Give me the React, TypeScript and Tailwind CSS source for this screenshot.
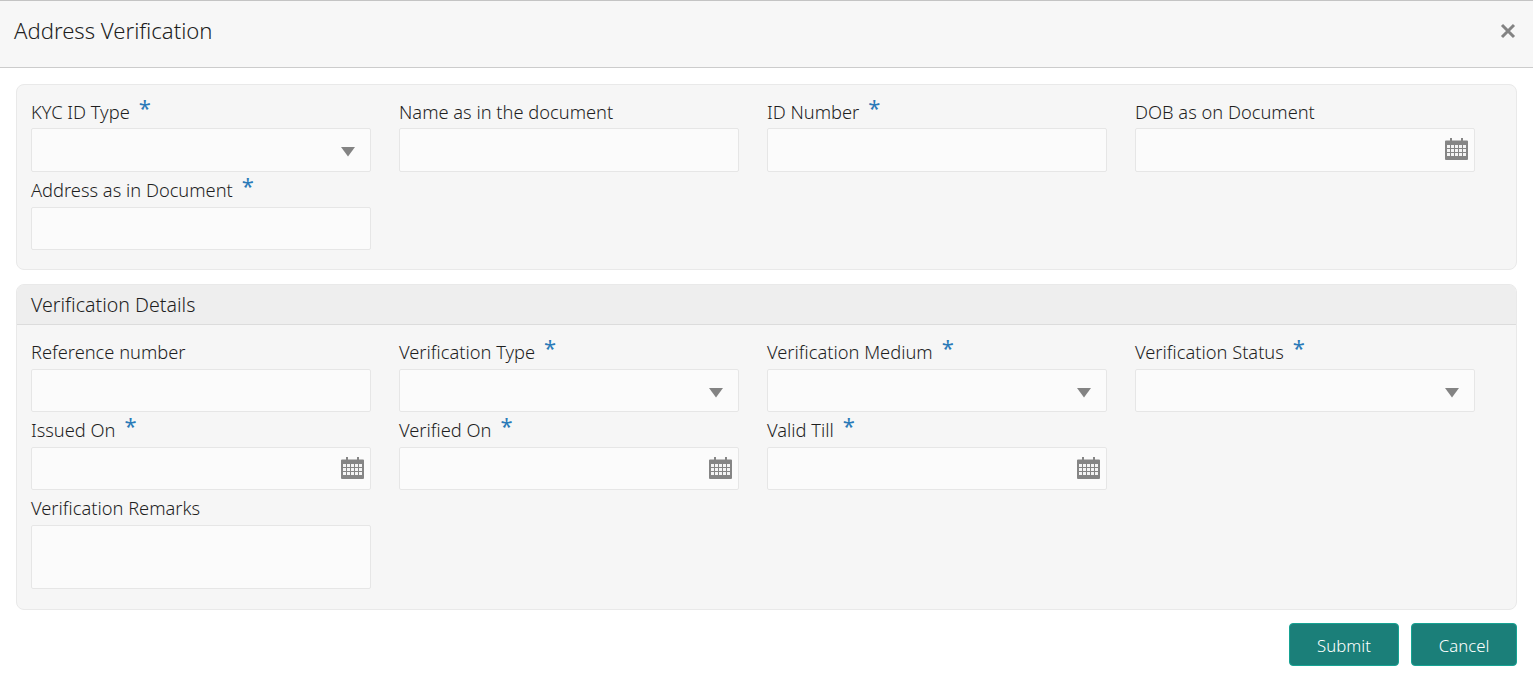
import React from 'react';

const Star = () => <span className="ml-[9px] text-[22px] font-normal leading-[22px] text-[#2a7ab8] relative top-[-5px] h-[22px]">*</span>;

const Caret = () => (
  <svg width="16" height="10" viewBox="0 0 16 10" className="absolute right-[14px] top-1/2 -translate-y-[3px]">
    <path d="M1 0h14L8 9.500z" fill="#838383" />
  </svg>
);

const CalendarIcon = () => (
  <svg width="23" height="23" viewBox="0 0 23 23" className="absolute right-[6px] top-1/2 -translate-y-[13px]">
    <path d="M0 4.500a1 1 0 0 1 1-1h4V1h2v2.500h9V1h2v2.500h4a1 1 0 0 1 1 1V22a1 1 0 0 1-1 1H1a1 1 0 0 1-1-1z" fill="#858585" />
    <path
      d="M2 8h3v3H2zM6 8h3v3H6zM10 8h3v3h-3zM14 8h3v3h-3zM18 8h3v3h-3zM2 12h3v3H2zM6 12h3v3H6zM10 12h3v3h-3zM14 12h3v3h-3zM18 12h3v3h-3zM2 16h3v3H2zM6 16h3v3H6zM10 16h3v3h-3zM14 16h3v3h-3zM18 16h3v3h-3z"
      fill="#f4f4f4"
    />
  </svg>
);

interface FieldProps {
  label: string;
  required?: boolean;
  kind?: 'text' | 'select' | 'date' | 'area';
  tall?: boolean;
}

const Field: React.FC<FieldProps> = ({ label, required, kind = 'text', tall }) => (
  <div className="w-[340px]">
    <div className={`flex h-[35px] items-center text-[18.3px] leading-[26px] font-[350] text-[#1f1f1f] ${tall ? 'pt-[3px]' : 'pt-[1px]'}`}>
      <span>{label}</span>
      {required && <Star />}
    </div>
    <div
      className={`relative rounded-[2px] border border-[#e6e6e6] bg-[#fbfbfb] ${
        kind === 'area' ? 'h-[64px]' : tall ? 'h-[44px]' : 'h-[43px]'
      }`}
    >
      {kind === 'select' && <Caret />}
      {kind === 'date' && <CalendarIcon />}
    </div>
  </div>
);

const App: React.FC = () => {
  return (
    <div className="w-[1533px] h-[684px] overflow-hidden bg-white font-['Noto_Sans',sans-serif]">
      {/* Entête */}
      <div className="flex h-[68px] items-center justify-between border-y border-t-[#c4c4c4] border-b-[#cccccc] bg-[#f7f7f7] pb-[6px] pl-[14px] pr-[17px]">
        <h1 className="text-[22.1px] text-[#1f1f1f] font-[350]">Address Verification</h1>
        <svg width="16" height="16" viewBox="0 0 16 16">
          <path d="M2 2l12 12M14 2L2 14" stroke="#838383" strokeWidth="3" fill="none" />
        </svg>
      </div>

      <div className="px-[16px] pt-[16px]">
        <div className="h-[186px] rounded-[8px] border border-[#e9e9e9] bg-[#f6f6f6] pl-[14px] pt-[8px]">
          <div className="grid grid-cols-[repeat(4,340px)] gap-x-[28px]">
            <Field label="KYC ID Type" required kind="select" tall />
            <Field label="Name as in the document" tall />
            <Field label="ID Number" required tall />
            <Field label="DOB as on Document" kind="date" tall />
            <Field label="Address as in Document" required />
          </div>
        </div>

        <div className="mt-[14px] h-[326px] rounded-[8px] border border-[#e9e9e9] bg-[#f6f6f6] overflow-hidden">
          <div className="flex h-[40px] items-center border-b border-[#dcdcdc] bg-[#eeeeee] pl-[14px] text-[19.6px] font-[350] text-[#1f1f1f]">
            Verification Details
          </div>
          <div className="grid grid-cols-[repeat(4,340px)] gap-x-[28px] pl-[14px] pt-[9px]">
            <Field label="Reference number" />
            <Field label="Verification Type" required kind="select" />
            <Field label="Verification Medium" required kind="select" />
            <Field label="Verification Status" required kind="select" />
            <Field label="Issued On" required kind="date" />
            <Field label="Verified On" required kind="date" />
            <Field label="Valid Till" required kind="date" />
            <div />
            <Field label="Verification Remarks" kind="area" />
          </div>
        </div>

        <div className="mt-[13px] flex justify-end gap-[12px]">
          <button className="h-[43px] w-[110px] rounded-[4px] border border-[#16a393] bg-[#1b7f79] pt-[2px] text-[16.8px] font-[350] text-white">
            Submit
          </button>
          <button className="h-[43px] w-[106px] rounded-[4px] border border-[#16a393] bg-[#1b7f79] pt-[2px] text-[16.8px] font-[350] text-white">
            Cancel
          </button>
        </div>
      </div>
    </div>
  );
};

export default App;
